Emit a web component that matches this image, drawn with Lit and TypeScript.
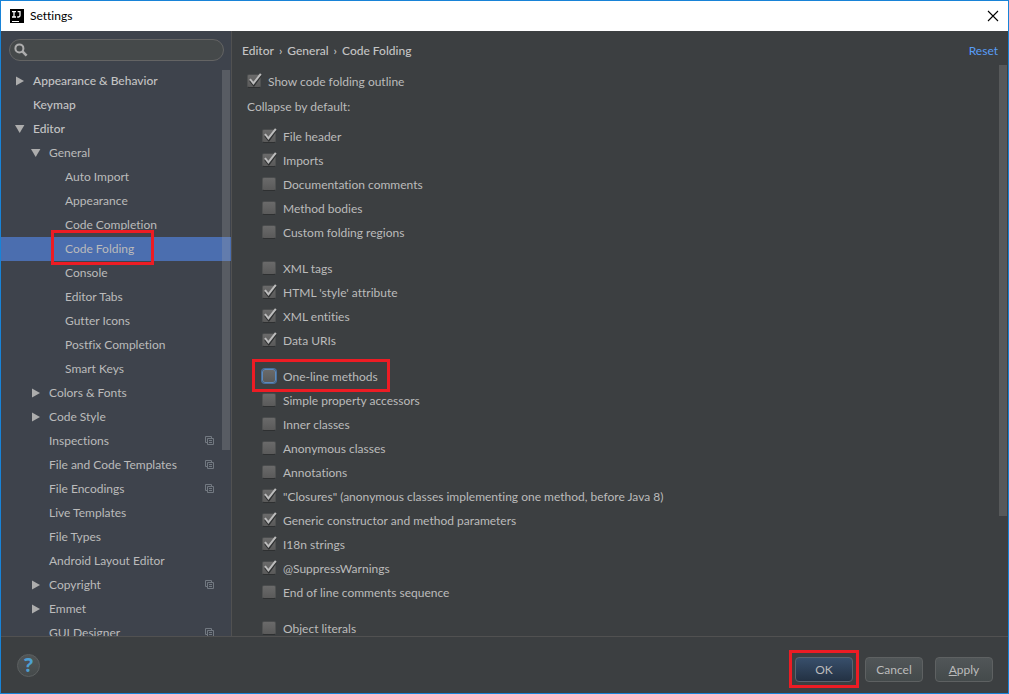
import { LitElement, html, css, svg, nothing } from "lit";
import { customElement, property, state } from "lit/decorators.js";
import { classMap } from "lit/directives/class-map.js";

interface Node {
  label: string;
  level: number;
  arrow?: "open" | "closed";
  project?: boolean;
  selected?: boolean;
}

interface Option {
  label: string;
  on?: boolean;
  focused?: boolean;
}

const TREE: Node[] = [
  { label: "Appearance & Behavior", level: 0, arrow: "closed" },
  { label: "Keymap", level: 0 },
  { label: "Editor", level: 0, arrow: "open" },
  { label: "General", level: 1, arrow: "open" },
  { label: "Auto Import", level: 2 },
  { label: "Appearance", level: 2 },
  { label: "Code Completion", level: 2 },
  { label: "Code Folding", level: 2, selected: true },
  { label: "Console", level: 2 },
  { label: "Editor Tabs", level: 2 },
  { label: "Gutter Icons", level: 2 },
  { label: "Postfix Completion", level: 2 },
  { label: "Smart Keys", level: 2 },
  { label: "Colors & Fonts", level: 1, arrow: "closed" },
  { label: "Code Style", level: 1, arrow: "closed" },
  { label: "Inspections", level: 1, project: true },
  { label: "File and Code Templates", level: 1, project: true },
  { label: "File Encodings", level: 1, project: true },
  { label: "Live Templates", level: 1 },
  { label: "File Types", level: 1 },
  { label: "Android Layout Editor", level: 1 },
  { label: "Copyright", level: 1, arrow: "closed", project: true },
  { label: "Emmet", level: 1, arrow: "closed" },
  { label: "GUI Designer", level: 1, project: true },
];

const GROUPS: Option[][] = [
  [
    { label: "File header", on: true },
    { label: "Imports", on: true },
    { label: "Documentation comments" },
    { label: "Method bodies" },
    { label: "Custom folding regions" },
  ],
  [
    { label: "XML tags" },
    { label: "HTML 'style' attribute", on: true },
    { label: "XML entities", on: true },
    { label: "Data URIs", on: true },
  ],
  [
    { label: "One-line methods", focused: true },
    { label: "Simple property accessors" },
    { label: "Inner classes" },
    { label: "Anonymous classes" },
    { label: "Annotations" },
    { label: "\"Closures\" (anonymous classes implementing one method, before Java 8)", on: true },
    { label: "Generic constructor and method parameters", on: true },
    { label: "I18n strings", on: true },
    { label: "@SuppressWarnings", on: true },
    { label: "End of line comments sequence" },
  ],
  [{ label: "Object literals" }],
];

@customElement("check-option")
export class CheckOption extends LitElement {
  @property() label = "";
  @property({ type: Boolean }) on = false;
  @property({ type: Boolean }) focused = false;

  static styles = css`
    :host {
      display: block;
    }
    .option {
      position: relative;
      display: flex;
      align-items: center;
      gap: 6px;
      width: fit-content;
      height: 24px;
      line-height: 24px;
      white-space: nowrap;
    }
    .tick {
      display: grid;
      width: 15px;
      height: 18px;
    }
    .box {
      grid-area: 1 / 1;
      box-sizing: border-box;
      appearance: none;
      width: 14px;
      height: 14px;
      margin: 1px 0 0;
      border: 1px solid;
      border-color: #4a4c4d #505252 #2e3031;
      border-radius: 2px;
      background: linear-gradient(#6a6a6a, #5a5a5a);
      outline: none;
    }
    .box.focused {
      border-color: #5d8abb;
      border-radius: 3px;
      box-shadow: 0 0 0 1px #48709f;
    }
    .mark {
      grid-area: 1 / 1;
      pointer-events: none;
    }
    .framed::after {
      content: "";
      position: absolute;
      box-sizing: border-box;
      top: -6px;
      left: -10px;
      width: 138px;
      height: 33px;
      border: 3px solid #ed1c24;
      pointer-events: none;
    }
  `;

  render() {
    return html`<label class=${classMap({ option: true, framed: this.focused })}>
      <span class="tick">
        <input
          type="checkbox"
          class=${classMap({ box: true, focused: this.focused })}
          .checked=${this.on}
          @change=${(e: Event) => (this.on = (e.target as HTMLInputElement).checked)}
        />
        ${this.on
          ? html`<svg class="mark" width="15" height="16" viewBox="0 0 15 16" aria-hidden="true">
              <path d="M3.2 7.8 6.8 12 13.6 2.6" fill="none" stroke="#2f3132" stroke-width="2.4" />
              <path d="M3 6 6.4 10.4 13.8 .8" fill="none" stroke="#bcbcbc" stroke-width="2" />
            </svg>`
          : nothing}
      </span>
      <span>${this.label}</span>
    </label>`;
  }
}

@customElement("app-root")
export class AppRoot extends LitElement {
  @state() private query = "";

  static styles = css`
    :host {
      display: block;
      font-family: Lato, "Open Sans", sans-serif;
      font-size: 12px;
      font-variant-ligatures: none;
      line-height: 24px;
      color: #bbbbbb;
    }
    *,
    *::after {
      box-sizing: border-box;
    }
    button,
    input {
      font: inherit;
      font-variant-ligatures: none;
      color: inherit;
    }
    .window {
      display: flex;
      flex-direction: column;
      height: 100vh;
      border: 1px solid #1883d7;
      background: #3c3f41;
    }
    .titlebar {
      flex: none;
      display: flex;
      align-items: center;
      gap: 6px;
      height: 30px;
      padding: 0 8px;
      background: #ffffff;
      color: #000000;
    }
    .title {
      flex: 1;
      margin: 0;
      font-size: 12px;
      font-weight: 400;
    }
    .close {
      display: grid;
      padding: 1px;
      border: 0;
      background: none;
    }
    .main {
      flex: 1;
      min-height: 0;
      display: grid;
      grid-template-columns: 231px minmax(0, 1fr);
    }
    .side {
      display: flex;
      flex-direction: column;
      min-height: 0;
      border-right: 1px solid #515151;
      background: #3e434c;
    }
    .search {
      flex: none;
      display: flex;
      align-items: center;
      gap: 6px;
      height: 22px;
      margin: 8px 7px 8px 8px;
      padding: 0 10px 0 4px;
      border: 1px solid #646464;
      border-radius: 11px;
      background: #45494a;
    }
    .query {
      flex: 1;
      min-width: 0;
      height: 18px;
      padding: 0;
      border: 0;
      outline: none;
      background: none;
    }
    .scroll {
      position: relative;
      flex: 1;
      min-height: 0;
      overflow: hidden;
    }
    .tree {
      margin: 0;
      padding: 0;
      list-style: none;
    }
    .node {
      position: relative;
      display: flex;
      align-items: center;
      width: 100%;
      height: 24px;
      padding: 0 17px 0 14px;
      border: 0;
      background: none;
      text-align: left;
      white-space: nowrap;
    }
    .level0 {
      color: #c4c4c4;
      font-weight: 500;
    }
    .level1 {
      padding-left: 30px;
    }
    .level2 {
      padding-left: 46px;
    }
    .selected {
      background: #4b6eaf;
    }
    .arrow {
      flex: none;
      width: 10px;
      height: 10px;
      margin-right: 8px;
      fill: #adadad;
    }
    .name {
      position: relative;
      flex: 1;
    }
    .selected .name::after {
      content: "";
      position: absolute;
      z-index: 1;
      top: -7px;
      left: -14px;
      width: 103px;
      height: 35px;
      border: 3px solid #ed1c24;
    }
    .thumb {
      position: absolute;
      z-index: 1;
      top: 1px;
      right: 1px;
      width: 8px;
      height: 67%;
      background: rgba(166, 166, 166, 0.25);
    }
    .thumb.long {
      top: 0;
      height: 79%;
    }
    .content {
      display: flex;
      flex-direction: column;
      min-height: 0;
    }
    .head {
      flex: none;
      display: flex;
      justify-content: space-between;
      height: 34px;
      padding: 8px 10px 0;
    }
    .crumbs {
      display: flex;
      gap: 5px;
      margin: 0;
      font-size: 12px;
      font-weight: 500;
      color: #c4c4c4;
    }
    .reset {
      color: #589df6;
      text-decoration: none;
    }
    .options {
      padding: 5px 15px 0;
    }
    .caption {
      margin: 1px 0 6px;
    }
    .group {
      padding-left: 15px;
      margin-bottom: 12px;
    }
    .footer {
      flex: none;
      display: flex;
      align-items: center;
      gap: 12px;
      height: 57px;
      padding: 8px 15px 0 16px;
      border-top: 1px solid #515151;
    }
    .help {
      display: grid;
      place-items: center;
      width: 23px;
      height: 23px;
      margin: 0 auto 8px 0;
      padding: 0;
      border: 1px solid #5c6061;
      border-radius: 50%;
      background: linear-gradient(#505455, #454a4b);
      color: #4d9fd1;
      font-family: "Noto Sans", sans-serif;
      font-size: 19px;
      font-weight: 700;
      line-height: 20px;
    }
    .button {
      position: relative;
      width: 58px;
      height: 25px;
      padding: 0;
      border: 1px solid #5e6162;
      border-radius: 4px;
      background: linear-gradient(#515658, #444a4b);
      line-height: 23px;
    }
    .primary {
      border-color: #5a6470;
      background: linear-gradient(#384f6b, #233143);
    }
    .primary::after {
      content: "";
      position: absolute;
      inset: -8px -7px -7px;
      border: 3px solid #ed1c24;
    }
  `;

  private arrow(kind?: "open" | "closed") {
    return html`<svg class="arrow" viewBox="0 0 10 10" aria-hidden="true">
      ${kind === "open" ? svg`<path d="M0 1h9.4L4.7 9z" />` : nothing}
      ${kind === "closed" ? svg`<path d="M1 .5v9L9 5z" />` : nothing}
    </svg>`;
  }

  private node(n: Node) {
    const classes = { node: true, [`level${n.level}`]: true, selected: !!n.selected };
    return html`<li>
      <button class=${classMap(classes)}>
        ${this.arrow(n.arrow)}<span class="name">${n.label}</span>
        ${n.project
          ? html`<svg width="9" height="10" viewBox="0 0 9 10" fill="none" stroke="#727981" aria-hidden="true">
              <path d="M2 6.5H.5v-6h6V2" />
              <path d="M2.5 2.5h6v6h-6z" />
              <path d="M4 4.5h3M4 6.5h3" />
            </svg>`
          : nothing}
      </button>
    </li>`;
  }

  render() {
    return html`<div class="window">
      <header class="titlebar">
        <svg width="15" height="15" viewBox="0 0 15 15" aria-hidden="true">
          <path d="M1 0h14v14H1z" fill="#000" />
          <path d="M3 2.6h4M5 2.6v5.2M3 8h4M8.6 2.6h3M11 2.6v4q0 1.4-1.4 1.4H8.2" fill="none" stroke="#fff" stroke-width="1.3" />
          <path d="M3 12.5h7" stroke="#fff" />
        </svg>
        <h1 class="title">Settings</h1>
        <button class="close" aria-label="Close">
          <svg width="12" height="12" viewBox="0 0 12 12" aria-hidden="true">
            <path d="M1 1l10 10M11 1 1 11" stroke="#000" stroke-width="1.1" />
          </svg>
        </button>
      </header>
      <div class="main">
        <nav class="side" aria-label="Settings sections">
          <label class="search">
            <svg width="14" height="14" viewBox="0 0 14 14" fill="none" stroke="#adadad" aria-hidden="true">
              <circle cx="5.4" cy="5.4" r="4" stroke-width="2" />
              <path d="M8.4 8.4 12.6 12.6" stroke-width="2.6" />
            </svg>
            <input
              class="query"
              type="text"
              aria-label="Search settings"
              .value=${this.query}
              @input=${(e: Event) => (this.query = (e.target as HTMLInputElement).value)}
            />
          </label>
          <div class="scroll">
            <ul class="tree">
              ${TREE.map((n) => this.node(n))}
            </ul>
            <div class="thumb"></div>
          </div>
        </nav>
        <section class="content">
          <div class="head">
            <h2 class="crumbs"><span>Editor</span><span>›</span><span>General</span><span>›</span><span>Code Folding</span></h2>
            <a class="reset" href="#">Reset</a>
          </div>
          <div class="scroll">
            <div class="options">
              <check-option label="Show code folding outline" on></check-option>
              <p class="caption">Collapse by default:</p>
              ${GROUPS.map(
                (g) => html`<div class="group">
                  ${g.map(
                    (o) => html`<check-option .label=${o.label} .on=${!!o.on} .focused=${!!o.focused}></check-option>`
                  )}
                </div>`
              )}
            </div>
            <div class="thumb long"></div>
          </div>
        </section>
      </div>
      <footer class="footer">
        <button class="help" aria-label="Help">?</button>
        <button class="button primary">OK</button>
        <button class="button">Cancel</button>
        <button class="button"><u>A</u>pply</button>
      </footer>
    </div>`;
  }
}
